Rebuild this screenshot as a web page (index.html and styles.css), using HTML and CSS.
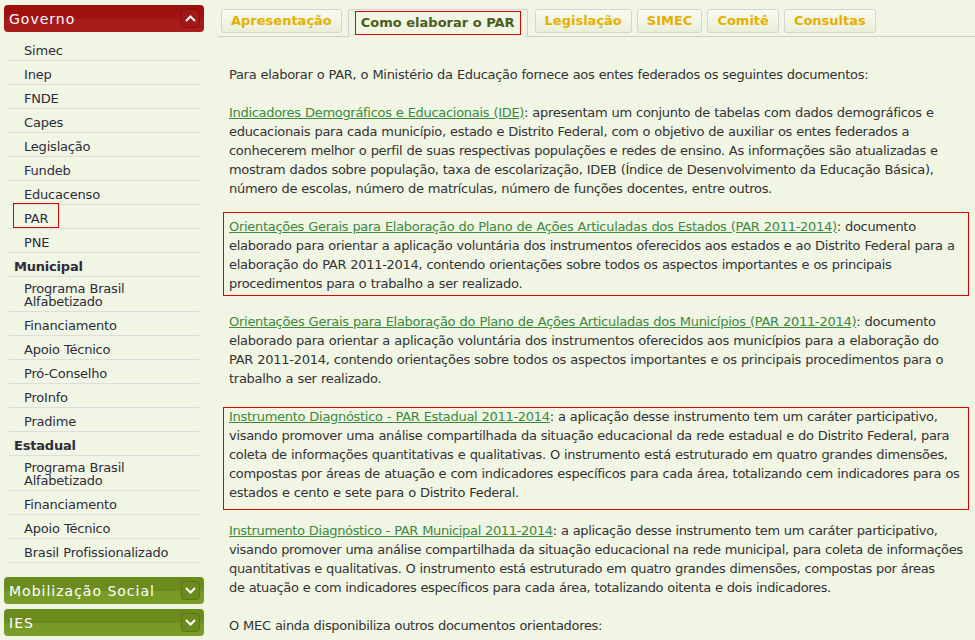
FILE: index.html
```html
<!DOCTYPE html>
<html lang="pt-BR">
<head>
<meta charset="utf-8">
<title>Como elaborar o PAR</title>
<link rel="stylesheet" href="styles.css">
</head>
<body>
<div class="page">
  <aside class="sidebar">
    <div class="panel-head red">
      <span class="panel-title">Governo</span>
      <span class="toggle"><svg width="11" height="7" viewBox="0 0 11 7"><path d="M1 6 L5.5 1.5 L10 6" fill="none" stroke="#fff" stroke-width="2"/></svg></span>
    </div>
    <ul class="menu">
      <li class="item">Simec</li>
      <li class="item">Inep</li>
      <li class="item">FNDE</li>
      <li class="item">Capes</li>
      <li class="item">Legislação</li>
      <li class="item">Fundeb</li>
      <li class="item">Educacenso</li>
      <li class="item marked"><span class="mark-side"></span>PAR</li>
      <li class="item">PNE</li>
      <li class="group">Municipal</li>
      <li class="item two">Programa Brasil Alfabetizado</li>
      <li class="item">Financiamento</li>
      <li class="item">Apoio Técnico</li>
      <li class="item">Pró-Conselho</li>
      <li class="item">ProInfo</li>
      <li class="item">Pradime</li>
      <li class="group">Estadual</li>
      <li class="item two">Programa Brasil Alfabetizado</li>
      <li class="item">Financiamento</li>
      <li class="item">Apoio Técnico</li>
      <li class="item">Brasil Profissionalizado</li>
    </ul>
    <div class="panel-head green first-green">
      <span class="panel-title">Mobilização Social</span>
      <span class="toggle"><svg width="11" height="7" viewBox="0 0 11 7"><path d="M1 1 L5.5 5.5 L10 1" fill="none" stroke="#fff" stroke-width="2"/></svg></span>
    </div>
    <div class="panel-head green">
      <span class="panel-title">IES</span>
      <span class="toggle"><svg width="11" height="7" viewBox="0 0 11 7"><path d="M1 1 L5.5 5.5 L10 1" fill="none" stroke="#fff" stroke-width="2"/></svg></span>
    </div>
  </aside>

  <main class="main">
    <nav class="tabs">
      <span class="tab">Apresentação</span>
      <span class="tab active"><span class="mark-tab"></span>Como elaborar o PAR</span>
      <span class="tab">Legislação</span>
      <span class="tab">SIMEC</span>
      <span class="tab">Comitê</span>
      <span class="tab">Consultas</span>
    </nav>

    <div class="content">
      <p>Para elaborar o PAR, o Ministério da Educação fornece aos entes federados os seguintes documentos:</p>
      <p><a href="#">Indicadores Demográficos e Educacionais (IDE)</a>: apresentam um conjunto de tabelas com dados demográficos e educacionais para cada município, estado e Distrito Federal, com o objetivo de auxiliar os entes federados a conhecerem melhor o perfil de suas respectivas populações e redes de ensino. As informações são atualizadas e mostram dados sobre população, taxa de escolarização, IDEB (Índice de Desenvolvimento da Educação Básica), número de escolas, número de matrículas, número de funções docentes, entre outros.</p>
      <p class="boxed"><span class="mark-box box-a"></span><a href="#">Orientações Gerais para Elaboração do Plano de Ações Articuladas dos Estados (PAR 2011-2014)</a>: documento elaborado para orientar a aplicação voluntária dos instrumentos oferecidos aos estados e ao Distrito Federal para a elaboração do PAR 2011-2014, contendo orientações sobre todos os aspectos importantes e os principais procedimentos para o trabalho a ser realizado.</p>
      <p class="loose"><a href="#">Orientações Gerais para Elaboração do Plano de Ações Articuladas dos Municípios (PAR 2011-2014)</a>: documento elaborado para orientar a aplicação voluntária dos instrumentos oferecidos aos municípios para a elaboração do PAR 2011-2014, contendo orientações sobre todos os aspectos importantes e os principais procedimentos para o trabalho a ser realizado.</p>
      <p class="boxed"><span class="mark-box box-b"></span><a href="#">Instrumento Diagnóstico - PAR Estadual 2011-2014</a>: a aplicação desse instrumento tem um caráter participativo, visando promover uma análise compartilhada da situação educacional da rede estadual e do Distrito Federal, para coleta de informações quantitativas e qualitativas. O instrumento está estruturado em quatro grandes dimensões, compostas por áreas de atuação e com indicadores específicos para cada área, totalizando cem indicadores para os estados e cento e sete para o Distrito Federal.</p>
      <p class="tight"><a href="#">Instrumento Diagnóstico - PAR Municipal 2011-2014</a>: a aplicação desse instrumento tem um caráter participativo, visando promover uma análise compartilhada da situação educacional na rede municipal, para coleta de informações quantitativas e qualitativas. O instrumento está estruturado em quatro grandes dimensões, compostas por áreas de&nbsp;atuação e com indicadores específicos para cada área, totalizando oitenta e dois indicadores.</p>
      <p>O MEC ainda disponibiliza outros documentos orientadores:</p>
    </div>
  </main>
</div>
</body>
</html>
```

FILE: styles.css
```css
html, body {
  margin: 0;
  padding: 0;
}
body {
  background: #f1f5e4;
  font-family: "DejaVu Sans", Verdana, sans-serif;
  font-size: 13px;
  color: #333;
  overflow: hidden;
}
.page {
  display: flex;
  align-items: flex-start;
}
.sidebar {
  width: 200px;
  margin: 5px 0 0 4px;
  flex: none;
}
.panel-head {
  height: 27px;
  border-radius: 4px;
  display: flex;
  align-items: center;
  justify-content: space-between;
  padding: 0 4px 0 5px;
  box-sizing: border-box;
  color: #fff;
}
.panel-head.red {
  background: linear-gradient(#9c0f0f 0%, #a01212 50%, #a81a1a 52%, #a81c1c 100%);
}
.panel-head.green {
  background: linear-gradient(#6a8a1e 0%, #6d8c20 50%, #779a25 52%, #7a9d27 100%);
  margin-top: 5px;
}
.panel-head.first-green {
  margin-top: 14px;
}
.panel-title {
  font-size: 14px;
  letter-spacing: 1px;
  font-weight: normal;
}
.toggle {
  width: 19px;
  height: 19px;
  border-radius: 4px;
  display: flex;
  align-items: center;
  justify-content: center;
  box-sizing: border-box;
}
.red .toggle {
  background: #a11818;
  border: 1px solid #8e0c0c;
}
.green .toggle {
  background: #6c8a1f;
  border: 1px solid #5a7616;
}
.menu {
  list-style: none;
  margin: 5px 0 0 5px;
  padding: 0;
  width: 190px;
  letter-spacing: -0.2px;
  word-spacing: 0.3px;
}
.menu li {
  border-bottom: 1px solid #dcdde1;
  line-height: 13px;
  padding: 7px 0 3px;
  color: #2d2d3a;
}
.menu .item {
  padding-left: 15px;
}
.menu .item.two {
  padding-top: 5px;
  padding-bottom: 3px;
}
.menu .group {
  padding-left: 5px;
  font-weight: bold;
}
.marked {
  position: relative;
}
.mark-side {
  position: absolute;
  left: 4px;
  top: -2px;
  width: 44px;
  height: 23px;
  border: 1px solid #e00000;
}
.main {
  flex: 1;
  margin-left: 14px;
  min-width: 0;
}
.tabs {
  display: flex;
  align-items: flex-start;
  gap: 5px;
  margin-top: 9px;
  height: 27px;
  border-bottom: 1px solid #cfcfcf;
  padding-left: 3px;
}
.tab {
  height: 24px;
  box-sizing: border-box;
  padding: 0 9px;
  border: 1px solid #d3d5cc;
  border-radius: 3px;
  background: linear-gradient(#fafcf2, #e9eed8);
  color: #e5b000;
  font-weight: bold;
  font-size: 13px;
  line-height: 22px;
  white-space: nowrap;
}
.tab.active {
  position: relative;
  height: 28px;
  padding: 0 12px;
  margin: 0 2px 0 1px;
  background: #f1f5e4;
  border-color: #cfcfcf;
  border-bottom: none;
  color: #4b5d1c;
  line-height: 26px;
}
.mark-tab {
  position: absolute;
  left: 6px;
  right: 6px;
  top: 1px;
  height: 24px;
  border: 1px solid #e00000;
  box-sizing: border-box;
}
.content {
  width: 735px;
  padding: 28px 0 0 11px;
  letter-spacing: -0.3px;
  word-spacing: 0.35px;
}
.content p {
  margin: 0 0 19px;
  line-height: 19px;
}
.content p.loose {
  letter-spacing: -0.27px;
}
.content p.tight {
  letter-spacing: -0.35px;
}
.content a {
  color: #3b8a3e;
  text-decoration: underline;
}
.boxed {
  position: relative;
}
.mark-box {
  position: absolute;
  left: -6px;
  right: -5px;
  border: 1px solid #e00000;
  pointer-events: none;
}
.box-a {
  top: -5px;
  bottom: -3px;
}
.box-b {
  top: 0;
  bottom: -8px;
}
```
